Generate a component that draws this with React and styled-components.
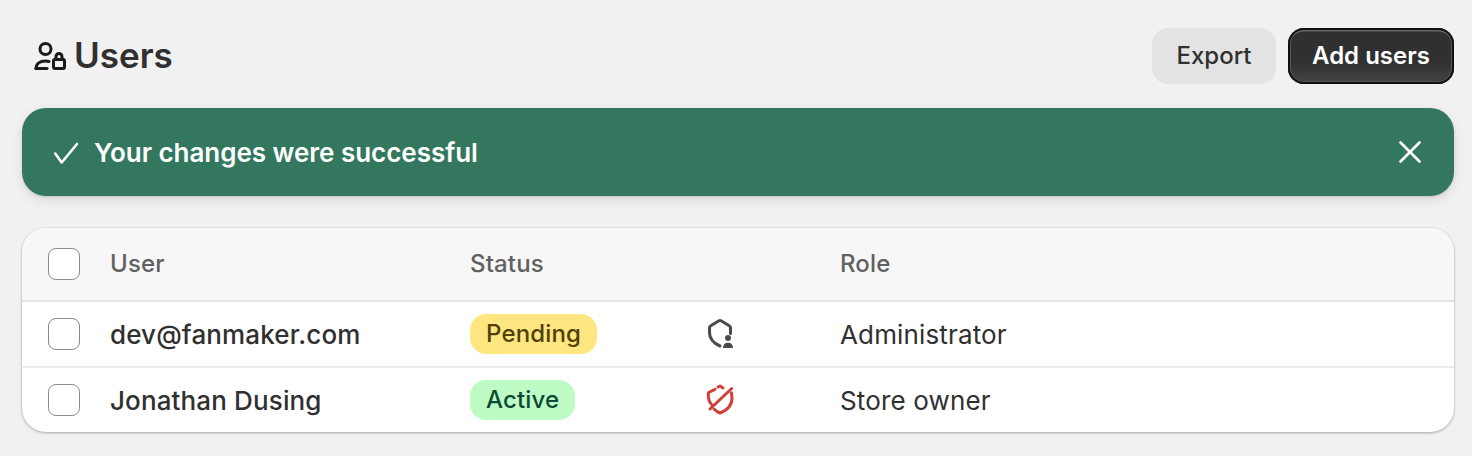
import React from "react";
import styled, { createGlobalStyle } from "styled-components";

const GlobalStyle = createGlobalStyle`
  html, body {
    margin: 0;
    padding: 0;
    background: #f1f1f1;
    font-family: Inter, "Liberation Sans", sans-serif;
    font-optical-sizing: none;
    font-variation-settings: "opsz" 14;
    color: #303030;
  }
`;

const users = [
  {
    name: "dev@fanmaker.com",
    status: "Pending",
    tone: "pending",
    icon: "person",
    role: "Administrator",
  },
  {
    name: "Jonathan Dusing",
    status: "Active",
    tone: "active",
    icon: "off",
    role: "Store owner",
  },
];

function UserLockIcon() {
  return (
    <TitleIcon viewBox="0 0 32 28" fill="none" stroke="#1a1a1a" strokeWidth="3" strokeLinecap="round" strokeLinejoin="round">
      <circle cx="11.500" cy="7" r="5.500" />
      <path d="M2 26.500c0-4.500 3.500-7.500 9.500-7.500 1.500 0 2.500.2 3.500.5" />
      <path d="M2 26.500h11" />
      <rect x="19.500" y="17.500" width="11" height="9" rx="1.500" />
      <path d="M22 17v-2.500a3 3 0 0 1 6 0V17" />
    </TitleIcon>
  );
}

function ShieldPersonIcon() {
  return (
    <RowIcon viewBox="0 0 32 32" fill="none">
      <path
        d="M27.500 15.500V9.500c0-.8-.4-1.400-1.200-1.700L18 2.800c-.7-.4-1.300-.4-2 0L7.700 7.800c-.8.300-1.200.9-1.200 1.700v5c0 6 3.500 10.500 10.500 13.500"
        stroke="#4a4a4a"
        strokeWidth="3"
        strokeLinecap="round"
        strokeLinejoin="round"
      />
      <circle cx="25" cy="20" r="3" fill="#4a4a4a" />
      <path d="M20 30c0-3.500 2-5.200 5-5.200s5 1.700 5 5.200z" fill="#4a4a4a" />
    </RowIcon>
  );
}

function ShieldOffIcon() {
  return (
    <RowIcon viewBox="0 0 32 32" fill="none" stroke="#d1403a" strokeWidth="3" strokeLinecap="round" strokeLinejoin="round">
      <path d="M12 5.300 5.500 8.500C4.800 14 5.800 18 9 21" />
      <path d="M15 3l2-1 3 2" />
      <path d="M28.500 9l.5 5c0 6.500-4 12-12 15-2.300-.9-4.300-2.200-6-4" />
      <path d="M7 25 28.700 4.500" />
    </RowIcon>
  );
}

export default function App() {
  return (
    <Page>
      <GlobalStyle />
      <Header>
        <Title>
          <UserLockIcon />
          <h1>Users</h1>
        </Title>
        <Actions>
          <SecondaryButton>Export</SecondaryButton>
          <PrimaryButton>Add users</PrimaryButton>
        </Actions>
      </Header>

      <Banner>
        <BannerText>
          <svg width="28" height="28" viewBox="0 0 28 28" fill="none" stroke="#fff" strokeWidth="2.600" strokeLinecap="round" strokeLinejoin="round">
            <path d="M3.200 15.500l6.500 9L25 6" />
          </svg>
          Your changes were successful
        </BannerText>
        <CloseButton aria-label="Dismiss">
          <svg width="24" height="24" viewBox="0 0 24 24" fill="none" stroke="#fff" strokeWidth="2.600" strokeLinecap="round">
            <path d="M2.500 2.500l19 19M21.500 2.500l-19 19" />
          </svg>
        </CloseButton>
      </Banner>

      <Card>
        <HeadRow>
          <Checkbox />
          <HeadCell>User</HeadCell>
          <HeadCell>Status</HeadCell>
          <span />
          <HeadCell>Role</HeadCell>
        </HeadRow>
        {users.map((user) => (
          <Row key={user.name}>
            <Checkbox />
            <UserName>{user.name}</UserName>
            <span>
              <Badge $tone={user.tone}>{user.status}</Badge>
            </span>
            <IconCell>
              {user.icon === "person" ? <ShieldPersonIcon /> : <ShieldOffIcon />}
            </IconCell>
            <RoleName>{user.role}</RoleName>
          </Row>
        ))}
      </Card>
    </Page>
  );
}

const Page = styled.div`
  box-sizing: border-box;
  width: 1472px;
  height: 456px;
  padding: 28px 18px 0 22px;
  overflow: hidden;
`;

const Header = styled.div`
  display: flex;
  justify-content: space-between;
  align-items: center;
  height: 56px;
`;

const Title = styled.div`
  display: flex;
  align-items: center;
  gap: 8px;
  padding-left: 12px;

  h1 {
    margin: 0 0 3px;
    font-size: 35px;
    font-weight: 600;
    color: #303030;
  }
`;

const TitleIcon = styled.svg`
  width: 32px;
  height: 28px;
`;

const Actions = styled.div`
  display: flex;
  gap: 12px;
`;

const SecondaryButton = styled.button`
  width: 124px;
  height: 56px;
  padding: 0 0 2px;
  border: none;
  border-radius: 16px;
  background: #e3e3e3;
  color: #303030;
  font-family: inherit;
  font-variation-settings: inherit;
  font-optical-sizing: inherit;
  font-size: 24px;
  font-weight: 500;
`;

const PrimaryButton = styled.button`
  box-sizing: border-box;
  width: 166px;
  height: 56px;
  padding: 0 0 2px;
  border: none;
  border-radius: 16px;
  background: linear-gradient(#303030 60%, #444);
  box-shadow: inset 0 0 0 2px #111, inset 0 3.500px 0 0 #666, inset 0 0 0 3px #555, inset 0 -3px 0 0 #0c0c0c;
  color: #fff;
  font-family: inherit;
  font-variation-settings: inherit;
  font-optical-sizing: inherit;
  font-size: 24px;
  font-weight: 600;
`;

const Banner = styled.div`
  display: flex;
  justify-content: space-between;
  align-items: center;
  height: 88px;
  margin-top: 24px;
  padding: 0 32px 0 30px;
  border-radius: 24px;
  background: #33785e;
  box-shadow: 0 4px 12px rgba(0, 0, 0, 0.1), 0 1px 2px rgba(0, 0, 0, 0.12);
`;

const BannerText = styled.div`
  display: flex;
  align-items: center;
  gap: 14px;
  color: #fff;
  font-size: 26px;
  font-weight: 600;
  letter-spacing: -0.03px;
`;

const CloseButton = styled.button`
  display: flex;
  padding: 0;
  border: none;
  background: none;
`;

const Card = styled.div`
  margin-top: 32px;
  height: 204px;
  border-radius: 24px;
  background: #fff;
  overflow: hidden;
  box-shadow: 0 1px 3px rgba(0, 0, 0, 0.28), 0 0 0 1px rgba(0, 0, 0, 0.03);
`;

const columns = `
  display: grid;
  grid-template-columns: 32px 390px 233px 137px 1fr;
  align-items: center;
  padding-left: 26px;
`;

const HeadRow = styled.div`
  ${columns}
  height: 72px;
  background: #f7f7f7;
  border-bottom: 2px solid #e3e3e3;

  > :nth-child(2) {
    margin-left: 30px;
  }
`;

const Row = styled.div`
  ${columns}
  height: 64px;
  & + & {
    border-top: 2px solid #ebebeb;
  }

  > :nth-child(2) {
    margin-left: 30px;
  }
`;

const Checkbox = styled.span`
  box-sizing: border-box;
  display: block;
  width: 32px;
  height: 32px;
  border: 1.500px solid #8a8a8a;
  border-radius: 8px;
  background: #fff;
`;

const HeadCell = styled.span`
  padding-bottom: 2px;
  font-size: 24px;
  font-weight: 500;
  letter-spacing: 0.15px;
  color: #616161;
`;

const UserName = styled.span`
  font-size: 26px;
  font-weight: 500;
  letter-spacing: 0.13px;
  color: #303030;
`;

const RoleName = styled.span`
  font-size: 26px;
  font-weight: 400;
  letter-spacing: 0.15px;
  color: #303030;
`;

const Badge = styled.span`
  display: inline-block;
  height: 40px;
  line-height: 40px;
  padding: 0 16px;
  border-radius: 16px;
  font-size: 24px;
  font-weight: 500;
  letter-spacing: 0.15px;
  background: ${(p) => (p.$tone === "pending" ? "#ffe680" : "#bdfac4")};
  color: ${(p) => (p.$tone === "pending" ? "#4f4108" : "#0c4a36")};
`;

const IconCell = styled.span`
  display: flex;
`;

const RowIcon = styled.svg`
  width: 32px;
  height: 32px;
`;
